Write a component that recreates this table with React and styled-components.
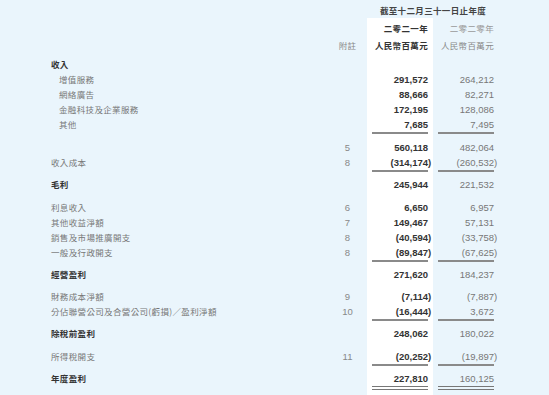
import React from 'react';
import styled, { createGlobalStyle } from 'styled-components';

const GlobalStyle = createGlobalStyle`
    html, body {
        margin: 0;
        padding: 0;
        background: #eaf5fc;
    }
    body {
        font-family: "Liberation Sans", "Noto Sans CJK TC", sans-serif;
        -webkit-font-smoothing: antialiased;
    }
`;

const Page = styled.div`
    width: 549px;
    height: 395px;
    overflow: hidden;
    padding: 3px 0 0 51px;
    box-sizing: border-box;
`;

const Row = styled.div`
    display: grid;
    grid-template-columns: 280px 36px 66px 66px;
    align-items: stretch;

    & > div {
        padding-top: ${p => p.$pt || 0}px;
    }
`;

const Label = styled.div`
    font-family: "Noto Sans CJK TC", sans-serif;
    font-size: 8.5px;
    letter-spacing: 0.35px;
    line-height: 15px;
    height: 15px;
    white-space: nowrap;
    padding-left: ${p => (p.$indent ? 8 : 0)}px;
    color: ${p => (p.$bold ? '#333' : '#777')};
    font-weight: ${p => (p.$bold ? 700 : 400)};
`;

const Note = styled.div`
    line-height: 15px;
    color: #888;
    text-align: center;
    padding-right: 3px;
    font-family: ${p => (p.$cjk ? '"Noto Sans CJK TC", sans-serif' : 'inherit')};
    font-size: ${p => (p.$cjk ? '8.5px' : '9.5px')};
    letter-spacing: ${p => (p.$cjk ? '0.35px' : '0')};
`;

const Col = styled.div`
    background: ${p => (p.$current ? '#fff' : 'transparent')};
    height: ${p => p.$h || 'auto'};
`;

const Amount = styled.div`
    margin: 0 5px;
    height: 15px;
    line-height: 15px;
    text-align: right;
    font-size: 9.5px;
    white-space: nowrap;
    color: ${p => (p.$current ? '#333' : '#777')};
    font-weight: ${p => (p.$current ? 700 : 400)};
    border-bottom: ${p =>
        p.$line === 'double' ? '4px double #777' : p.$line === 'single' ? '2px solid #8a8a8a' : 'none'};
`;

const Paren = styled.span`
    margin-right: -3.2px;
`;

const HeadText = styled.div`
    font-family: "Noto Sans CJK TC", sans-serif;
    font-size: 8.5px;
    letter-spacing: 0.35px;
    line-height: 15px;
    white-space: nowrap;
    text-align: ${p => p.$align || 'right'};
    padding-right: ${p => (p.$align === 'center' ? 0 : 5)}px;
    color: ${p => p.$color};
    font-weight: ${p => (p.$bold ? 700 : 400)};
`;

const Span = styled.div`
    grid-column: 3 / 5;
`;

const rows = [
    { label: '收入', bold: true, pt: 4 },
    { label: '增值服務', indent: true, cur: '291,572', prev: '264,212' },
    { label: '網絡廣告', indent: true, cur: '88,666', prev: '82,271' },
    { label: '金融科技及企業服務', indent: true, cur: '172,195', prev: '128,086' },
    { label: '其他', indent: true, cur: '7,685', prev: '7,495', line: 'single' },
    { label: '', note: '5', cur: '560,118', prev: '482,064', pt: 6 },
    { label: '收入成本', note: '8', cur: '(314,174)', prev: '(260,532)', line: 'single' },
    { label: '毛利', bold: true, cur: '245,944', prev: '221,532', pt: 5 },
    { label: '利息收入', note: '6', cur: '6,650', prev: '6,957', pt: 8 },
    { label: '其他收益淨額', note: '7', cur: '149,467', prev: '57,131' },
    { label: '銷售及市場推廣開支', note: '8', cur: '(40,594)', prev: '(33,758)' },
    { label: '一般及行政開支', note: '8', cur: '(89,847)', prev: '(67,625)', line: 'single' },
    { label: '經營盈利', bold: true, cur: '271,620', prev: '184,237', pt: 5 },
    { label: '財務成本淨額', note: '9', cur: '(7,114)', prev: '(7,887)', pt: 7.5 },
    { label: '分佔聯營公司及合營公司(虧損)／盈利淨額', note: '10', cur: '(16,444)', prev: '3,672', line: 'single' },
    { label: '除稅前盈利', bold: true, cur: '248,062', prev: '180,022', pt: 4.5 },
    { label: '所得稅開支', note: '11', cur: '(20,252)', prev: '(19,897)', line: 'single', pt: 8 },
    { label: '年度盈利', bold: true, cur: '227,810', prev: '160,125', line: 'double', pt: 5.5 },
];

function Value({ value }) {
    if (!value) return null;
    if (value.startsWith('(')) {
        return <>{value.slice(0, -1)}<Paren>)</Paren></>;
    }
    return value;
}

class IncomeStatement extends React.Component {
    render() {
        return (
            <Page>
                <GlobalStyle />
                <Row>
                    <div />
                    <div />
                    <Span>
                        <HeadText $align="center" $color="#444" $bold>截至十二月三十一日止年度</HeadText>
                    </Span>
                </Row>
                <Row $pt={2.5}>
                    <div />
                    <div />
                    <Col $current><HeadText $color="#333" $bold>二零二一年</HeadText></Col>
                    <Col><HeadText $color="#9a9a9a">二零二零年</HeadText></Col>
                </Row>
                <Row $pt={2}>
                    <div />
                    <Note $cjk>附註</Note>
                    <Col $current><HeadText $color="#333" $bold>人民幣百萬元</HeadText></Col>
                    <Col><HeadText $color="#888">人民幣百萬元</HeadText></Col>
                </Row>
                {rows.map((r, i) => (
                    <Row key={i} $pt={r.pt}>
                        <Label $bold={r.bold} $indent={r.indent}>{r.label}</Label>
                        <Note>{r.note}</Note>
                        <Col $current>
                            <Amount $current $line={r.line}><Value value={r.cur} /></Amount>
                        </Col>
                        <Col>
                            <Amount $line={r.line}><Value value={r.prev} /></Amount>
                        </Col>
                    </Row>
                ))}
                <Row>
                    <div />
                    <div />
                    <Col $current $h="40px" />
                    <Col />
                </Row>
            </Page>
        );
    }
}

export default IncomeStatement;
